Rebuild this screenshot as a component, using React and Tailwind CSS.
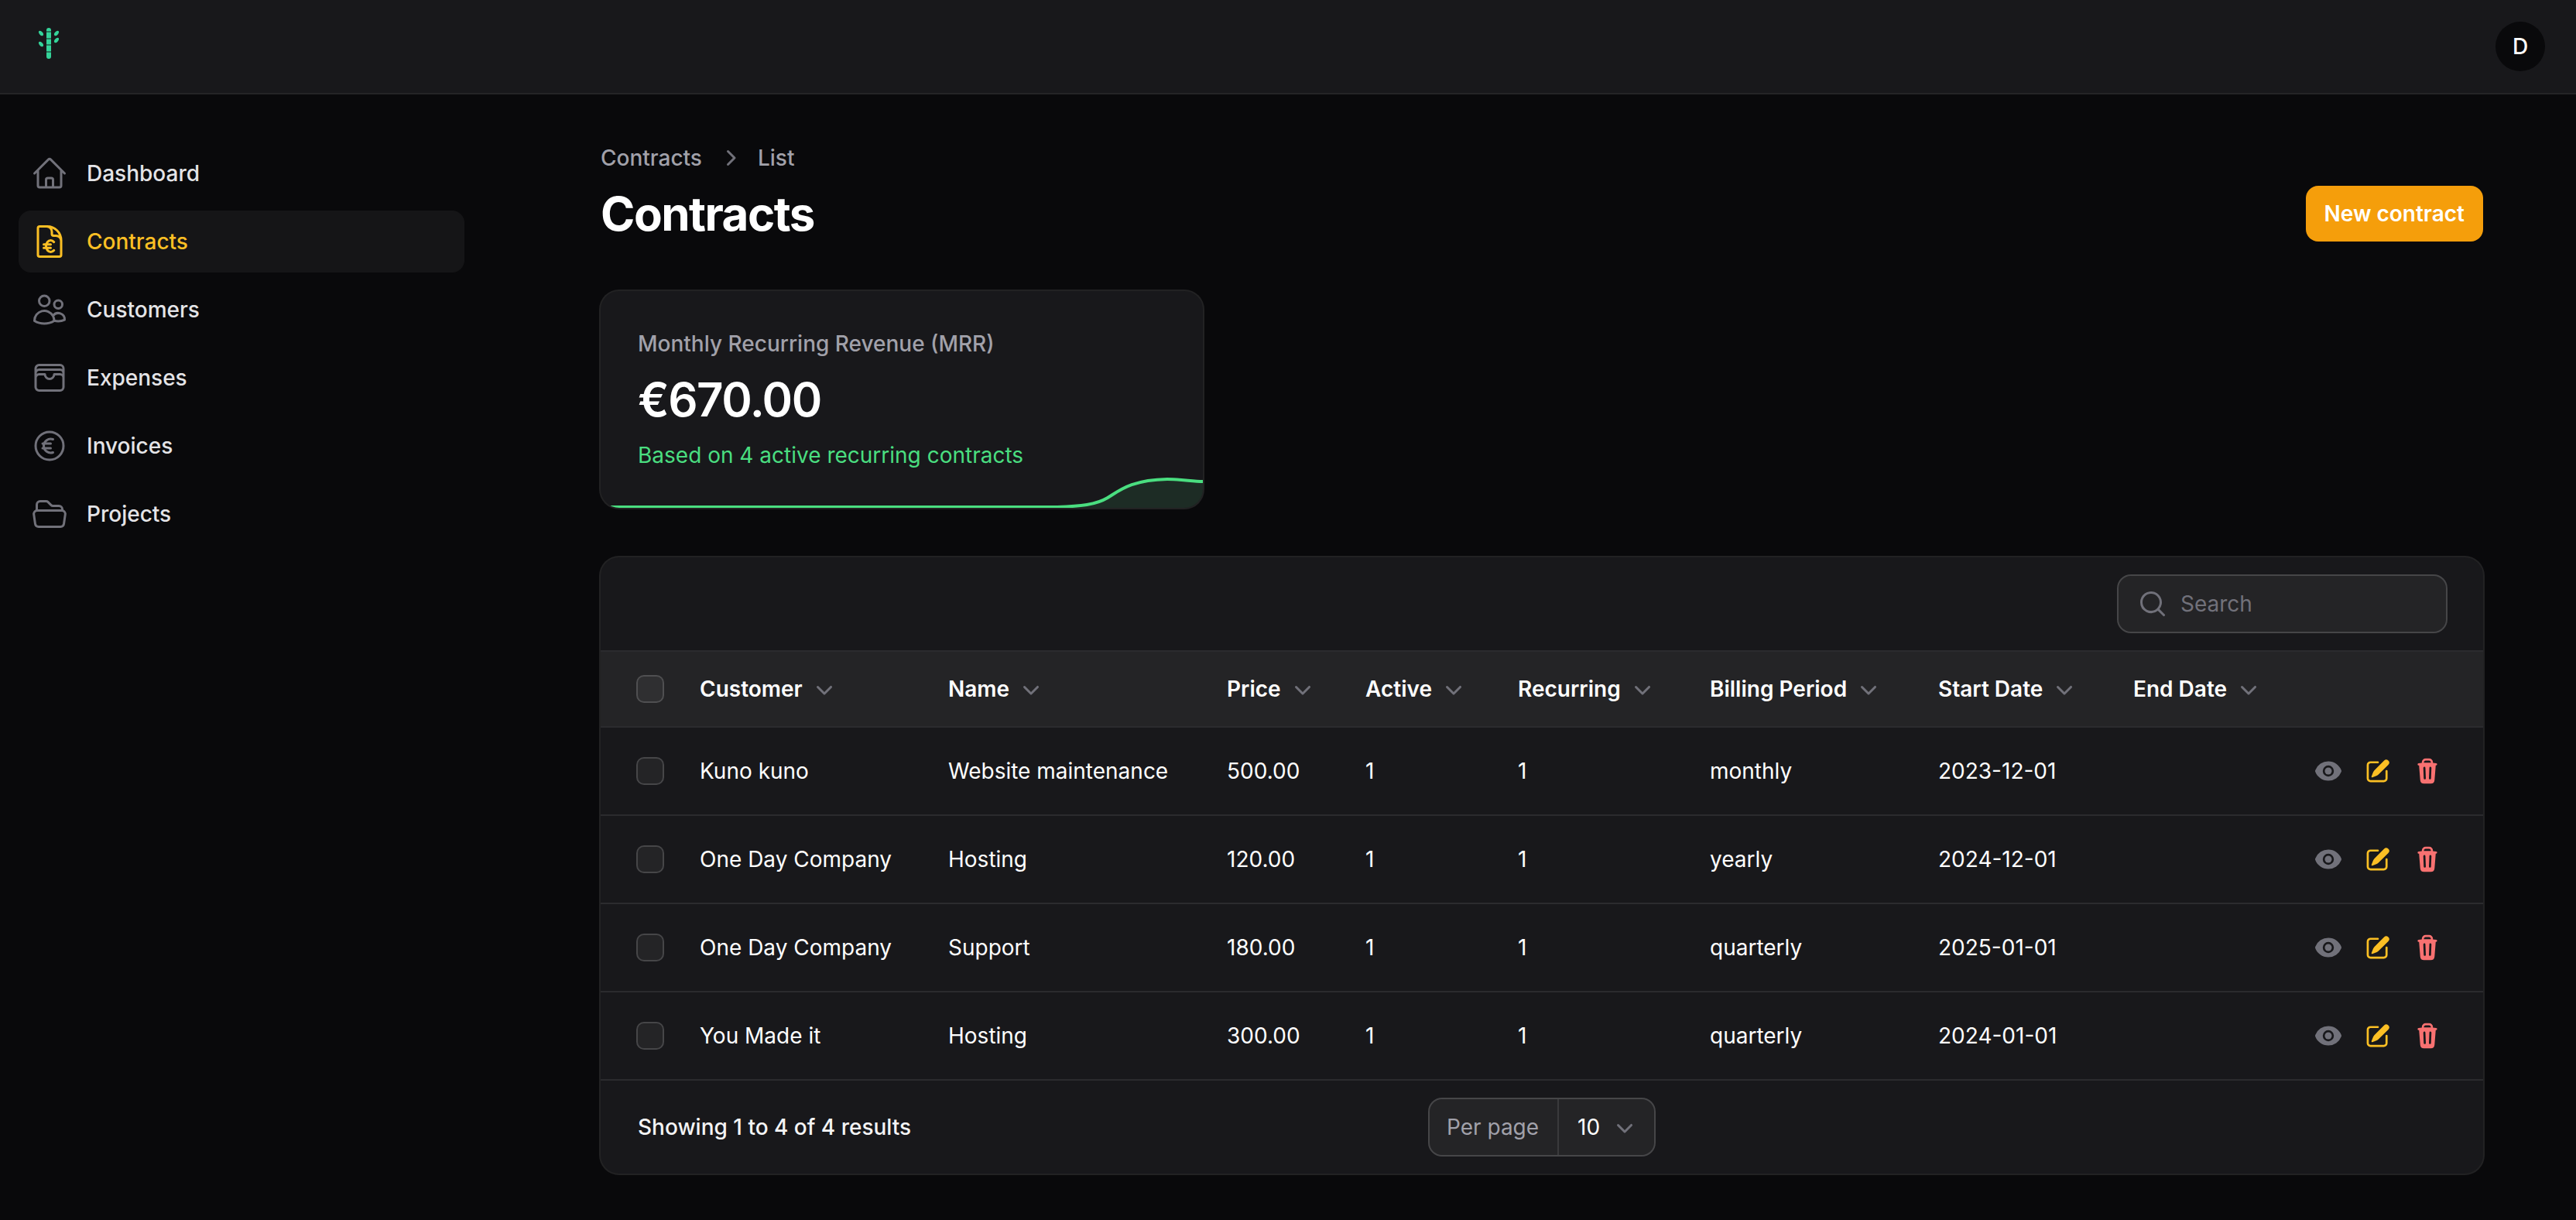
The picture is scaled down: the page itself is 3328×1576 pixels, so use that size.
import React from 'react';
import {
    HiOutlineHome,
    HiOutlineDocumentCurrencyEuro,
    HiOutlineUsers,
    HiOutlineWallet,
    HiOutlineCurrencyEuro,
    HiOutlineFolderOpen,
} from 'react-icons/hi2';
import {
    HiMiniChevronDown,
    HiMiniChevronRight,
    HiMiniEye,
    HiMiniMagnifyingGlass,
    HiMiniPencilSquare,
    HiMiniTrash,
} from 'react-icons/hi2';

const navItems = [
    { label: 'Dashboard', icon: HiOutlineHome },
    { label: 'Contracts', icon: HiOutlineDocumentCurrencyEuro, active: true },
    { label: 'Customers', icon: HiOutlineUsers },
    { label: 'Expenses', icon: HiOutlineWallet },
    { label: 'Invoices', icon: HiOutlineCurrencyEuro },
    { label: 'Projects', icon: HiOutlineFolderOpen },
];

const columns = [
    { label: 'Customer', width: 'w-[321px]' },
    { label: 'Name', width: 'w-[360px]' },
    { label: 'Price', width: 'w-[179px]' },
    { label: 'Active', width: 'w-[197px]' },
    { label: 'Recurring', width: 'w-[248px]' },
    { label: 'Billing Period', width: 'w-[295px]' },
    { label: 'Start Date', width: 'w-[252px]' },
    { label: 'End Date', width: 'w-[476px]' },
];

const rows = [
    ['Kuno kuno', 'Website maintenance', '500.00', '1', '1', 'monthly', '2023-12-01'],
    ['One Day Company', 'Hosting', '120.00', '1', '1', 'yearly', '2024-12-01'],
    ['One Day Company', 'Support', '180.00', '1', '1', 'quarterly', '2025-01-01'],
    ['You Made it', 'Hosting', '300.00', '1', '1', 'quarterly', '2024-01-01'],
];

const Logo = () => (
    <svg viewBox="0 0 40 48" className="w-[40px] h-[48px]" fill="#34d399">
        <path d="M17 3a3 3 0 0 1 6 0v1.500h-6z" />
        <rect x="17" y="5.500" width="6" height="8" />
        <rect x="17" y="14.500" width="6" height="7" />
        <rect x="17" y="22.500" width="6" height="8" />
        <path d="M17 31.500h6v5.500a3 3 0 0 1-6 0z" />
        <ellipse cx="10" cy="7" rx="2.200" ry="3.800" transform="rotate(-40 10 7)" />
        <ellipse cx="10" cy="21" rx="2.200" ry="3.800" transform="rotate(-40 10 21)" />
        <ellipse cx="30" cy="7" rx="2.200" ry="3.800" transform="rotate(40 30 7)" />
        <ellipse cx="30" cy="16" rx="2.200" ry="3.800" transform="rotate(40 30 16)" />
    </svg>
);

const Checkbox = () => (
    <div className="w-[32px] h-[32px] rounded-[8px] bg-white/5 ring-2 ring-white/20"></div>
);

const App = () => {
    return (
        <div className="min-h-screen w-full bg-[#09090b] text-white font-['Inter',sans-serif] text-[28px] leading-[40px]">
            <header className="h-[122px] bg-[#18181b] border-b-2 border-white/5 flex items-center justify-between pl-[43px] pr-[40px]">
                <Logo />
                <div className="w-[64px] h-[64px] rounded-full bg-[#09090b] flex items-center justify-center font-medium">D</div>
            </header>

            <div className="flex">
                <aside className="w-[640px] flex-shrink-0 pl-[24px] pr-[40px] pt-[62px]">
                    <nav className="flex flex-col gap-[8px]">
                        {navItems.map((item) => (
                            <a
                                key={item.label}
                                className={`h-[80px] rounded-[16px] px-[16px] flex items-center gap-[24px] font-medium ${item.active ? 'bg-white/5 text-[#fbbf24]' : 'text-[#e4e4e7]'}`}
                            >
                                <item.icon className={`w-[48px] h-[48px] ${item.active ? 'text-[#fbbf24]' : 'text-[#71717a]'}`} />
                                {item.label}
                            </a>
                        ))}
                    </nav>
                </aside>

                <main className="flex-1 min-w-0 pl-[136px] pr-[120px] pt-[62px]">
                    <div className="flex items-end justify-between">
                        <div>
                            <div className="flex items-center gap-[16px] text-[#a1a1aa] font-medium">
                                <span>Contracts</span>
                                <HiMiniChevronRight className="w-[40px] h-[40px] text-[#71717a]" />
                                <span>List</span>
                            </div>
                            <h1 className="mt-[16px] text-[60px] leading-[72px] font-bold tracking-tight">Contracts</h1>
                        </div>
                        <button className="h-[72px] px-[24px] rounded-[16px] bg-[#f59e0b] font-semibold text-white">New contract</button>
                    </div>

                    {/* MRR stat */}
                    <div className="relative mt-[64px] w-[778px] h-[280px] p-[48px] rounded-[24px] bg-[#18181b] ring-2 ring-white/10 overflow-hidden">
                        <p className="font-medium text-[#a1a1aa]">Monthly Recurring Revenue (MRR)</p>
                        <p className="mt-[16px] text-[60px] leading-[72px] font-semibold tracking-tight">€670.00</p>
                        <p className="mt-[16px] text-[#4ade80]">Based on 4 active recurring contracts</p>
                        <svg viewBox="0 0 778 48" className="absolute left-0 bottom-0 w-full h-[48px]" fill="none">
                            <path d="M0 47L590 47C620 46 640 44 655 35C670 26 685 12 732 11C750 11 765 14 778 14L778 48L0 48Z" fill="#4ade80" fillOpacity="0.1" />
                            <path d="M0 47L590 47C620 46 640 44 655 35C670 26 685 12 732 11C750 11 765 14 778 14" stroke="#4ade80" strokeWidth="4" />
                        </svg>
                    </div>

                    {/* Table */}
                    <div className="mt-[64px] mb-[60px] rounded-[24px] bg-[#18181b] ring-2 ring-white/10 overflow-hidden">
                        <div className="h-[120px] px-[48px] flex items-center justify-end">
                            <div className="w-[423px] h-[72px] rounded-[16px] bg-white/5 ring-2 ring-white/20 flex items-center gap-[16px] px-[24px]">
                                <HiMiniMagnifyingGlass className="w-[40px] h-[40px] text-[#71717a] flex-shrink-0" />
                                <input
                                    type="text"
                                    placeholder="Search"
                                    className="w-full bg-transparent outline-none placeholder:text-[#71717a]"
                                />
                            </div>
                        </div>

                        <table className="w-full table-fixed border-collapse">
                            <thead>
                                <tr className="h-[98px] bg-white/5 border-t-2 border-b-2 border-[#2b2b2e]">
                                    <th className="w-[104px] pl-[48px]"><Checkbox /></th>
                                    {columns.map((col) => (
                                        <th key={col.label} className={`${col.width} pl-[24px] text-left font-semibold`}>
                                            <span className="flex items-center gap-[8px]">
                                                {col.label}
                                                <HiMiniChevronDown className="w-[40px] h-[40px] text-[#71717a]" />
                                            </span>
                                        </th>
                                    ))}
                                </tr>
                            </thead>
                            <tbody>
                                {rows.map((row, i) => (
                                    <tr key={i} className="h-[114px] border-b-2 border-[#2b2b2e]">
                                        <td className="pl-[48px]"><Checkbox /></td>
                                        {row.map((cell, j) => (
                                            <td key={j} className="pl-[24px]">{cell}</td>
                                        ))}
                                        <td className="pr-[54px]">
                                            <div className="flex items-center justify-end gap-[28px]">
                                                <HiMiniEye className="w-[36px] h-[36px] text-[#71717a]" />
                                                <HiMiniPencilSquare className="w-[36px] h-[36px] text-[#fbbf24]" />
                                                <HiMiniTrash className="w-[36px] h-[36px] text-[#f87171]" />
                                            </div>
                                        </td>
                                    </tr>
                                ))}
                            </tbody>
                        </table>

                        <div className="h-[120px] px-[48px] grid grid-cols-[1fr_auto_1fr] items-center">
                            <span className="font-medium text-[#f4f4f5]">Showing 1 to 4 of 4 results</span>
                            <div className="w-[290px] h-[72px] rounded-[16px] bg-white/5 ring-2 ring-white/20 flex items-center">
                                <span className="w-[167px] pl-[22px] text-[#a1a1aa] border-r-2 border-white/10 h-full flex items-center">Per page</span>
                                <span className="flex-1 pl-[24px] flex items-center justify-between pr-[18px]">
                                    10
                                    <HiMiniChevronDown className="w-[40px] h-[40px] text-[#71717a]" />
                                </span>
                            </div>
                            <div></div>
                        </div>
                    </div>
                </main>
            </div>
        </div>
    );
};

export default App;
